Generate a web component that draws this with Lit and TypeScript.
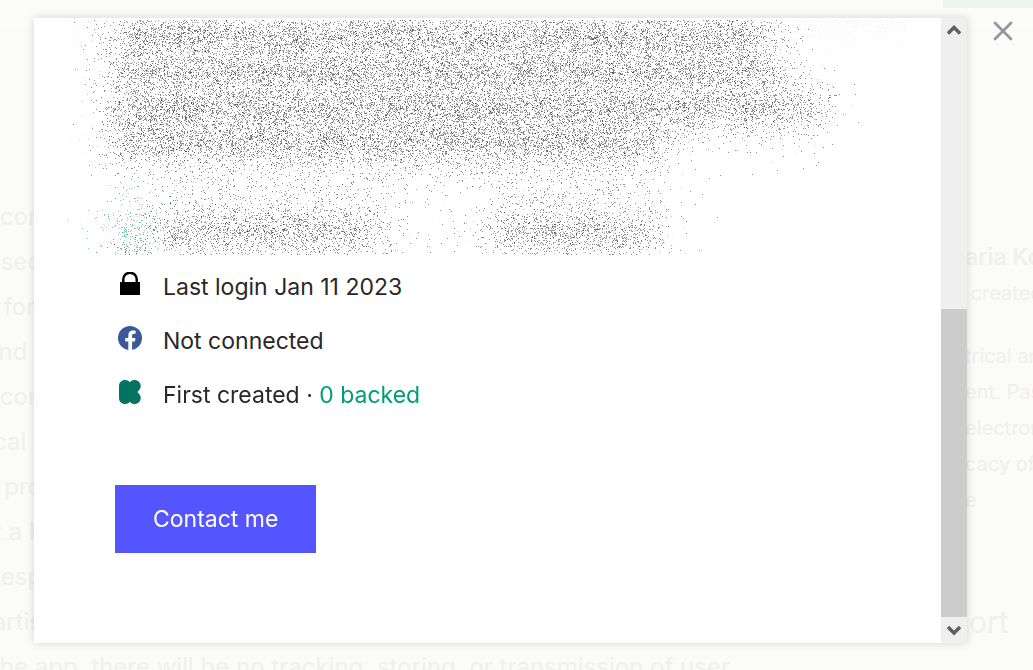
import { LitElement, html, css, svg } from "lit";
import { customElement, query } from "lit/decorators.js";

interface Cluster {
  left: number;
  right: number;
  y: number;
  count: number;
  spread: number;
  color: string;
}

/** Dust cloud that veils a concealed block of text. */
@customElement("dust-veil")
export class DustVeil extends LitElement {
  static styles = css`
    :host { display: block; overflow: hidden; }
    .dust { display: block; }
  `;

  @query("canvas") private canvas!: HTMLCanvasElement;

  private seed = 20230111;

  private random() {
    this.seed = (this.seed * 1664525 + 1013904223) >>> 0;
    return this.seed / 4294967296;
  }

  /** Bell-shaped offset with a tight core and long tails. */
  private drift() {
    const bell = (this.random() + this.random() + this.random() + this.random() - 2) * 1.7;
    return bell * (0.3 + this.random() * 1.5);
  }

  firstUpdated() {
    const ctx = this.canvas.getContext("2d");
    if (!ctx) return;
    const ink = "24,24,24";
    const clusters: Cluster[] = [
      { left: 48, right: 690, y: -19, count: 5400, spread: 15, color: ink },
      { left: 48, right: 698, y: 17, count: 7400, spread: 15, color: ink },
      { left: 48, right: 710, y: 52, count: 7400, spread: 15, color: ink },
      { left: 48, right: 750, y: 88, count: 7900, spread: 15, color: ink },
      { left: 48, right: 590, y: 122, count: 7400, spread: 18, color: ink },
      { left: 96, right: 308, y: 211, count: 3000, spread: 21, color: ink },
      { left: 430, right: 580, y: 211, count: 2200, spread: 21, color: ink },
      { left: 52, right: 74, y: 210, count: 320, spread: 17, color: "3,150,110" },
      { left: 56, right: 76, y: 236, count: 150, spread: 10, color: ink },
    ];
    for (const c of clusters) {
      for (let i = 0; i < c.count; i++) {
        const x = c.left + this.random() * (c.right - c.left) + this.drift() * c.spread;
        const y = c.y + (this.random() - 0.5) * 12 + this.drift() * c.spread;
        const alpha = this.random() < 0.72 ? 0.48 : 0.08 + this.random() * 0.25;
        ctx.fillStyle = `rgba(${c.color},${alpha})`;
        ctx.fillRect(Math.round(x), Math.round(y), 1, 1);
      }
    }
    for (let i = 0; i < 700; i++) {
      ctx.fillStyle = "rgba(0,0,0,0.03)";
      const x = i % 5 === 0 ? this.random() * 30 : 730 + this.random() * 108;
      ctx.fillRect(Math.round(x), Math.round(this.random() * this.random() * 45), 1, 1);
    }
  }

  render() {
    return html`<canvas class="dust" width="840" height="235" aria-hidden="true"></canvas>`;
  }
}

const lockIcon = svg`<path d="M2 10h2V7.500a8 8 0 0 1 16 0V10h2v13H2zM6.500 10h11V7.500a5.500 5.500 0 0 0-11 0z" fill="#000" fill-rule="evenodd"/>`;
const facebookIcon = svg`<circle cx="12" cy="12" r="12" fill="#3b5998"/><path d="M10.300 24v-8.600H7.300V12h3V9.300c0-3.100 1.800-4.700 4.600-4.700 1.300 0 2.700.2 2.700.2v3h-1.500c-1.500 0-2 .9-2 1.900V12h3.400l-.6 3.400h-2.800V24z" fill="#fff"/>`;
const kickIcon = svg`<path d="M7 0c2 0 3.700.8 4.800 2.200C13.100.7 14.600 0 16.400 0c3.500 0 6.300 2.600 6.300 6 0 1.500-.5 2.900-1.500 4l-1.700 2 1.700 2c1 1.100 1.500 2.500 1.500 4 0 3.400-2.700 6-6.200 6-1.900 0-3.500-.8-4.700-2.200C10.700 23.200 9 24 7 24c-3.300 0-6-2.500-6-6V6c0-3.500 2.700-6 6-6z" fill="#037362"/>`;

@customElement("app-root")
export class AppRoot extends LitElement {
  static styles = css`
    :host {
      display: block;
      position: relative;
      height: 100vh;
      overflow: hidden;
      background: #fbfbf9;
      color: #282828;
      font-family: Inter, "Liberation Sans", sans-serif;
      font-size: 23px;
    }
    p, ul, h2, h3 { margin: 0; padding: 0; font-weight: 400; }
    .page {
      display: grid;
      grid-template-columns: 42px 1fr 68px;
      grid-template-rows: 31px 1fr;
      height: 100%;
      color: #f0f0ee;
    }
    .page p, .page h2, .page h3 { white-space: pre; }
    .bar {
      grid-column: 1 / -1;
      display: flex;
      justify-content: flex-end;
      border-bottom: 1px solid #f8f8f6;
    }
    .tab { width: 90px; height: 8px; background: #edf3ef; }
    .story { padding-top: 163px; font-size: 24px; line-height: 45px; }
    .line { display: flex; justify-content: flex-end; }
    .last { margin-left: -8px; }
    .aside { grid-column: 3; padding-top: 208px; font-size: 20px; line-height: 36px; }
    .aside .name { font-size: 23px; font-weight: 600; }
    .about { padding-top: 27px; }
    .support { padding-top: 86px; padding-left: 4px; font-size: 30px; }
    .layer {
      position: absolute;
      inset: 0;
      display: flex;
      align-items: stretch;
      padding: 18px 0 27px 34px;
    }
    .dialog {
      flex: 1;
      display: flex;
      background: #fff;
      box-shadow: 0 0 8px rgba(0, 0, 0, 0.16);
    }
    .body { flex: 1; min-width: 0; padding-top: 2px; }
    .veil { margin-left: 34px; }
    .facts { list-style: none; padding: 5px 0 0 84px; }
    .fact { display: flex; align-items: center; gap: 21px; height: 54px; }
    .icon { width: 24px; height: 24px; padding-bottom: 6px; }
    .backed { color: #009e74; text-decoration: none; }
    .contact {
      margin: 63px 0 0 81px;
      padding: 0 38px;
      height: 68px;
      border: 0;
      background: #5555ff;
      color: #fff;
      font: inherit;
    }
    .scroll { width: 26px; display: flex; flex-direction: column; background: #efefef; }
    .step { height: 26px; padding: 0; border: 0; background: none; display: grid; place-items: center; }
    .track { flex: 1; display: flex; flex-direction: column; justify-content: flex-end; }
    .thumb { height: 53.8%; background: #cdcdcd; }
    .side { width: 66px; }
    .close { display: block; margin: 3px 0 0 26px; padding: 0; border: 0; background: none; line-height: 0; }
  `;

  render() {
    const lines = ["con", "sed", "for ", "nd t", "con", "cal r", "e pro", "t a k", "resp", "artis"];
    return html`
      <div class="page">
        <div class="bar"><div class="tab"></div></div>
        <div class="story">
          ${lines.map((line) => html`<p class="line">${line}</p>`)}
          <p class="last">the app, there will be no tracking, storing, or transmission of user</p>
        </div>
        <div class="aside">
          <h3 class="name">aria Ko</h3>
          <p>&nbsp;created</p>
          <div class="about">
            ${["trical and", "ent. Pas", "electron", "cacy of", "e"].map((line) => html`<p>${line}</p>`)}
          </div>
          <h2 class="support">ort</h2>
        </div>
      </div>
      <div class="layer">
        <section class="dialog" role="dialog" aria-label="Creator">
          <div class="body">
            <dust-veil class="veil"></dust-veil>
            <ul class="facts">
              <li class="fact"><svg class="icon" viewBox="0 0 24 24">${lockIcon}</svg><span>Last login Jan 11 2023</span></li>
              <li class="fact"><svg class="icon" viewBox="0 0 24 24">${facebookIcon}</svg><span>Not connected</span></li>
              <li class="fact"><svg class="icon" viewBox="0 0 24 24">${kickIcon}</svg><span>First created · <a class="backed" href="#backed">0 backed</a></span></li>
            </ul>
            <button class="contact">Contact me</button>
          </div>
          <div class="scroll">
            <button class="step" aria-label="Scroll up">
              <svg width="14" height="12" viewBox="0 0 14 12"><path d="M1 8.500 7 2.500l6 6" fill="none" stroke="#606060" stroke-width="3.400"/></svg>
            </button>
            <div class="track"><div class="thumb"></div></div>
            <button class="step" aria-label="Scroll down">
              <svg width="14" height="12" viewBox="0 0 14 12"><path d="M1 3l6 6 6-6" fill="none" stroke="#606060" stroke-width="3.400"/></svg>
            </button>
          </div>
        </section>
        <div class="side">
          <button class="close" aria-label="Close">
            <svg width="20" height="20" viewBox="0 0 20 20"><path d="M2 2l16 16M18 2 2 18" stroke="#9696a0" stroke-width="2.800" stroke-linecap="round"/></svg>
          </button>
        </div>
      </div>
    `;
  }
}
